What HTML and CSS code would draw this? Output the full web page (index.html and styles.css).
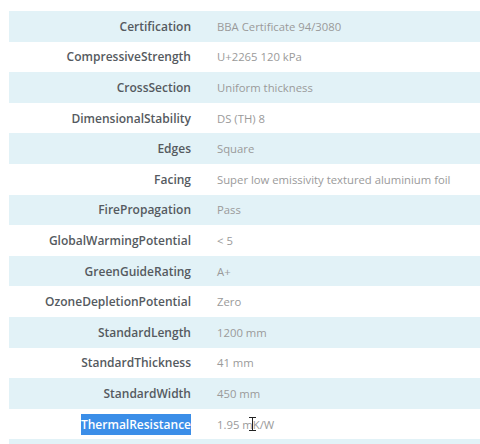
FILE: index.html
```html
<!DOCTYPE html>
<html>
<head>
<meta charset="utf-8">
<link rel="stylesheet" href="styles.css">
</head>
<body>
<table class="specs">
<tbody>
<tr><th>Certification</th><td>BBA Certificate 94/3080</td></tr>
<tr><th>CompressiveStrength</th><td>U+2265 120 kPa</td></tr>
<tr><th>CrossSection</th><td>Uniform thickness</td></tr>
<tr><th>DimensionalStability</th><td>DS (TH) 8</td></tr>
<tr><th>Edges</th><td>Square</td></tr>
<tr><th>Facing</th><td>Super low emissivity textured aluminium foil</td></tr>
<tr><th>FirePropagation</th><td>Pass</td></tr>
<tr><th>GlobalWarmingPotential</th><td>&lt; 5</td></tr>
<tr><th>GreenGuideRating</th><td>A+</td></tr>
<tr><th>OzoneDepletionPotential</th><td>Zero</td></tr>
<tr><th>StandardLength</th><td>1200 mm</td></tr>
<tr><th>StandardThickness</th><td>41 mm</td></tr>
<tr><th>StandardWidth</th><td>450 mm</td></tr>
<tr><th><span class="sel">ThermalResistance</span></th><td><span class="val">1.95 m<span class="caret"></span>K/W</span></td></tr>
<tr><th>&nbsp;</th><td>&nbsp;</td></tr>
</tbody>
</table>
</body>
</html>
```

FILE: styles.css
```css
html, body {
  margin: 0;
  padding: 0;
  background: #ffffff;
  overflow: hidden;
}
body {
  padding: 11px 0 0 9px;
  font-family: "Open Sans", "Liberation Sans", sans-serif;
  font-size: 12px;
}
.specs {
  border-collapse: collapse;
  width: 560px;
}
.specs tr {
  height: 30.6px;
}
.specs tr:nth-child(odd) {
  background: #e2f2f7;
}
.specs th {
  width: 182px;
  text-align: right;
  font-weight: 600;
  font-size: 12px;
  color: #555a60;
  padding: 0 13px 0 0;
  white-space: nowrap;
}
.specs td {
  text-align: left;
  color: #9a9a9a;
  font-size: 11.3px;
  padding: 0 0 0 13px;
  white-space: nowrap;
}
.sel {
  background: #3b8ee8;
  color: #ffffff;
  padding: 2px 0;
}
.val {
  position: relative;
}
.caret {
  position: relative;
  display: inline-block;
  width: 0;
}
.caret::before {
  content: "";
  position: absolute;
  left: -1px;
  top: -12px;
  width: 1px;
  height: 14px;
  background: #222;
}
.caret::after {
  content: "";
  position: absolute;
  left: -4px;
  top: -12px;
  width: 7px;
  height: 14px;
  border-top: 1px solid #222;
  border-bottom: 1px solid #222;
  box-sizing: border-box;
}
```
